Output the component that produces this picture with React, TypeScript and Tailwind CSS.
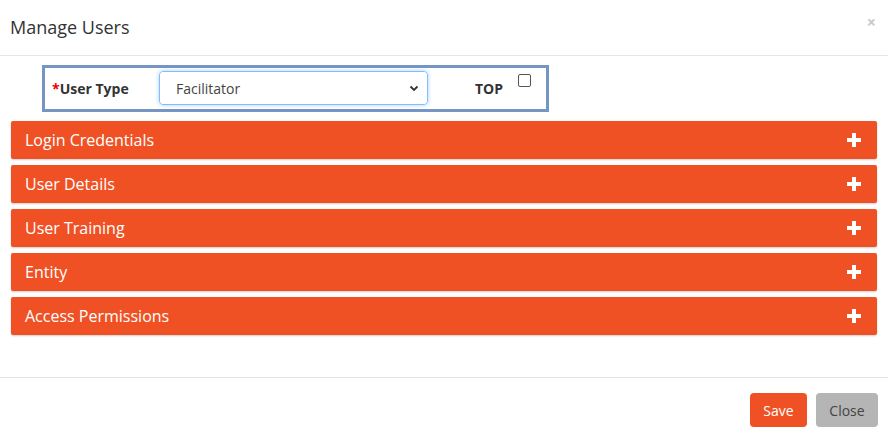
import React from "react"

const sections = ["Login Credentials", "User Details", "User Training", "Entity", "Access Permissions"]

const App: React.FC = () => {
  return (
    <div className="h-[440px] w-[888px] bg-white font-['Open_Sans',sans-serif] text-[#333]">
      {/* Header */}
      <div className="flex h-[56px] items-center justify-between border-b border-[#e5e5e5] pl-[10px] pr-[12px]">
        <h4 className="-mt-[2px] text-[18px] leading-none text-[#333]">Manage Users</h4>
        <button className="-mt-[12px] text-[16px] font-bold leading-none text-[#c8c8c8]">×</button>
      </div>

      {/* Body */}
      <div className="px-[11px] pt-[9px]">
        <div className="ml-[31px] flex h-[47px] w-[507px] items-center border-[3px] border-[#7596c3] pb-[1px] pl-[7px]">
          <label className="w-[107px] text-[14px] font-bold text-[#333]">
            <span className="text-[#e00]">*</span>User Type
          </label>
          <div className="relative h-[34px] w-[269px] rounded-[4px] border border-[#80bdff] shadow-[0_0_4px_rgba(0,123,255,0.35)]">
            <select
              defaultValue="Facilitator"
              className="h-full w-full appearance-none rounded-[4px] bg-white pl-[16px] text-[14px] text-[#444] outline-none"
            >
              <option>Facilitator</option>
            </select>
            <svg className="pointer-events-none absolute right-[8px] top-[13px]" width="10" height="7" viewBox="0 0 10 7">
              <path d="M1.5 1.5 L5 5 L8.5 1.5" fill="none" stroke="#333" strokeWidth="1.8" />
            </svg>
          </div>
          <span className="ml-[47px] text-[14px] font-bold text-[#333]">TOP</span>
          <span className="mb-[16px] ml-[15px] inline-block h-[13px] w-[13px] rounded-[2px] border border-[#555] bg-white" />
        </div>

        <div className="mt-[9px] flex flex-col gap-[6px]">
          {sections.map((s) => (
            <div
              key={s}
              className="flex h-[38px] items-center justify-between rounded-[2px] bg-[#f05124] pb-[1px] pl-[14px] pr-[16px] shadow-[0_1px_2px_rgba(0,0,0,0.2)]"
            >
              <span className="text-[16px] text-white">{s}</span>
              <svg width="14" height="14" viewBox="0 0 14 14">
                <rect x="5" y="0" width="4" height="14" fill="#fff" />
                <rect x="0" y="5" width="14" height="4" fill="#fff" />
              </svg>
            </div>
          ))}
        </div>
      </div>

      {/* Footer */}
      <div className="mt-[42px] flex justify-end gap-[9px] border-t border-[#e5e5e5] pr-[10px] pt-[15px]">
        <button className="h-[34px] w-[57px] rounded-[4px] bg-[#f05124] text-[14px] text-white">Save</button>
        <button className="h-[34px] w-[62px] rounded-[4px] bg-[#b5b5b5] text-[14px] text-[#444]">Close</button>
      </div>
    </div>
  )
}

export default App
